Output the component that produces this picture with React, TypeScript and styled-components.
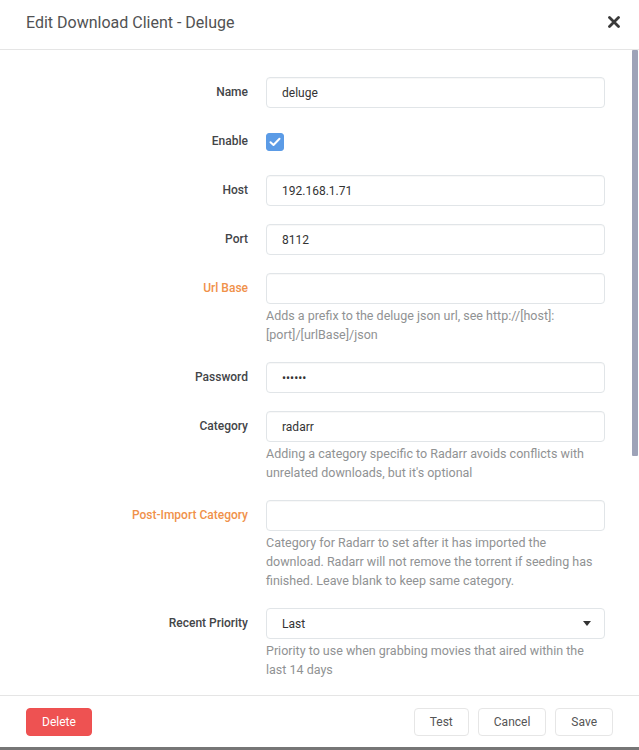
import React from 'react';
import styled, { createGlobalStyle } from 'styled-components';

const GlobalStyle = createGlobalStyle`
  html, body { margin: 0; padding: 0; background: #fff; }
  body { font-family: Roboto, "Open Sans", "Liberation Sans", sans-serif; }
  *, *::before, *::after { box-sizing: border-box; }
`;

const Modal = styled.div`
  width: 639px;
  height: 750px;
  display: flex;
  flex-direction: column;
  background: #fff;
  border-bottom: 3px solid #767676;
`;

const Header = styled.div`
  flex: none;
  height: 50px;
  padding: 0 19px 5px 26px;
  display: flex;
  align-items: center;
  justify-content: space-between;
  border-bottom: 1px solid #e5e5e5;
`;

const Title = styled.h2`
  margin: 0;
  font-size: 16px;
  font-weight: 400;
  color: #515253;
`;

const CloseButton = styled.button`
  border: 0;
  padding: 0;
  background: transparent;
  width: 12px;
  height: 12px;
  display: flex;
  color: #3a3a3a;
  cursor: pointer;
`;

const Body = styled.div`
  flex: 1;
  min-height: 0;
  display: flex;
`;

const Content = styled.div`
  flex: 1;
  min-width: 0;
  overflow: hidden;
  padding: 27px 27px 0 26px;
`;

const ScrollRail = styled.div`
  flex: none;
  width: 7px;
  padding-right: 1px;
`;

const ScrollThumb = styled.div<{ $size: number }>`
  height: ${(p) => p.$size}px;
  background: #9ea3b8;
  border-radius: 1px;
`;

const Row = styled.div`
  display: flex;
  align-items: flex-start;
  margin-bottom: 18px;
`;

const Label = styled.label<{ $advanced?: boolean }>`
  flex: none;
  width: 222px;
  margin-right: 18px;
  height: 31px;
  line-height: 31px;
  text-align: right;
  font-size: 12px;
  font-weight: 500;
  color: ${(p) => (p.$advanced ? '#f0914a' : '#434548')};
`;

const Field = styled.div`
  flex: 1;
  min-width: 0;
`;

const TextInput = styled.input`
  display: block;
  width: 100%;
  height: 31px;
  padding: 0 15px;
  border: 1px solid #e1e5e8;
  border-radius: 4px;
  background: #fff;
  box-shadow: inset 0 1px 1px rgba(0, 0, 0, 0.03);
  font-family: inherit;
  font-size: 12px;
  color: #333;
  outline: none;
`;

const SelectWrap = styled.div`
  position: relative;
`;

const Select = styled.select`
  display: block;
  width: 100%;
  height: 31px;
  padding: 0 15px;
  border: 1px solid #e1e5e8;
  border-radius: 4px;
  background: #fff;
  appearance: none;
  font-family: inherit;
  font-size: 12px;
  color: #333;
  outline: none;
`;

const Caret = styled.span`
  position: absolute;
  right: 14px;
  top: 13px;
  width: 0;
  height: 0;
  border-left: 4px solid transparent;
  border-right: 4px solid transparent;
  border-top: 5px solid #333;
  pointer-events: none;
`;

const CheckRow = styled.div`
  height: 31px;
  display: flex;
  align-items: center;
`;

const CheckBox = styled.span<{ $checked?: boolean }>`
  width: 18px;
  height: 18px;
  border-radius: 3px;
  display: flex;
  align-items: center;
  justify-content: center;
  background: ${(p) => (p.$checked ? '#5b9be6' : '#fff')};
  border: 1px solid ${(p) => (p.$checked ? '#5b9be6' : '#dde6e9')};
`;

const Help = styled.div`
  margin-top: 2px;
  padding-right: 8px;
  font-size: 12.5px;
  line-height: 19px;
  color: #909293;
`;

const Footer = styled.div`
  flex: none;
  height: 52px;
  padding: 0 26px;
  display: flex;
  align-items: center;
  border-top: 1px solid #e5e5e5;
`;

const Actions = styled.div`
  margin-left: auto;
  display: flex;
  gap: 9px;
`;

const Button = styled.button<{ $danger?: boolean }>`
  height: 28px;
  padding: 0 15px;
  border-radius: 4px;
  font-family: inherit;
  font-size: 12px;
  cursor: pointer;
  border: 1px solid ${(p) => (p.$danger ? '#ee5050' : '#e6e6e6')};
  background: ${(p) => (p.$danger ? '#ee5252' : '#fff')};
  color: ${(p) => (p.$danger ? '#fff' : '#555')};
`;

const CheckMark = () => (
  <svg width="12" height="10" viewBox="0 0 12 10" fill="none">
    <path d="M1.5 5.2 L4.5 8 L10.5 1.8" stroke="#fff" strokeWidth="2" strokeLinecap="round" strokeLinejoin="round" />
  </svg>
);

const CloseIcon = () => (
  <svg width="12" height="12" viewBox="0 0 12 12">
    <path d="M1.5 1.5 L10.5 10.5 M10.5 1.5 L1.5 10.5" stroke="currentColor" strokeWidth="2.8" strokeLinecap="round" />
  </svg>
);

type Input = {
  label: string;
  kind: 'text' | 'password' | 'check' | 'select';
  value?: string;
  checked?: boolean;
  help?: string;
  advanced?: boolean;
};

const fields: Input[] = [
  { label: 'Name', kind: 'text', value: 'deluge' },
  { label: 'Enable', kind: 'check', checked: true },
  { label: 'Host', kind: 'text', value: '192.168.1.71' },
  { label: 'Port', kind: 'text', value: '8112' },
  {
    label: 'Url Base',
    kind: 'text',
    value: '',
    advanced: true,
    help: 'Adds a prefix to the deluge json url, see http://[host]:[port]/[urlBase]/json',
  },
  { label: 'Password', kind: 'password', value: 'deluge' },
  {
    label: 'Category',
    kind: 'text',
    value: 'radarr',
    help: "Adding a category specific to Radarr avoids conflicts with unrelated downloads, but it's optional",
  },
  {
    label: 'Post-Import Category',
    kind: 'text',
    value: '',
    advanced: true,
    help: 'Category for Radarr to set after it has imported the download. Radarr will not remove the torrent if seeding has finished. Leave blank to keep same category.',
  },
  {
    label: 'Recent Priority',
    kind: 'select',
    value: 'Last',
    help: 'Priority to use when grabbing movies that aired within the last 14 days',
  },
];

const FieldControl = ({ f }: { f: Input }) => {
  switch (f.kind) {
    case 'check':
      return (
        <CheckRow>
          <CheckBox $checked={f.checked}>{f.checked && <CheckMark />}</CheckBox>
        </CheckRow>
      );
    case 'select':
      return (
        <SelectWrap>
          <Select value={f.value} onChange={() => undefined}>
            <option>First</option>
            <option>Last</option>
          </Select>
          <Caret />
        </SelectWrap>
      );
    default:
      return <TextInput type={f.kind} value={f.value} readOnly />;
  }
};

// visible height of the form area over its full scroll height
const VIEW_HEIGHT = 645;
const CONTENT_HEIGHT = 1025;

export default function App() {
  return (
    <>
      <GlobalStyle />
      <Modal>
        <Header>
          <Title>Edit Download Client - Deluge</Title>
          <CloseButton aria-label="Close">
            <CloseIcon />
          </CloseButton>
        </Header>
        <Body>
          <Content>
            {fields.map((f) => (
              <Row key={f.label}>
                <Label $advanced={f.advanced}>{f.label}</Label>
                <Field>
                  <FieldControl f={f} />
                  {f.help && <Help>{f.help}</Help>}
                </Field>
              </Row>
            ))}
          </Content>
          <ScrollRail>
            <ScrollThumb $size={Math.round((VIEW_HEIGHT * VIEW_HEIGHT) / CONTENT_HEIGHT)} />
          </ScrollRail>
        </Body>
        <Footer>
          <Button $danger>Delete</Button>
          <Actions>
            <Button>Test</Button>
            <Button>Cancel</Button>
            <Button>Save</Button>
          </Actions>
        </Footer>
      </Modal>
    </>
  );
}
